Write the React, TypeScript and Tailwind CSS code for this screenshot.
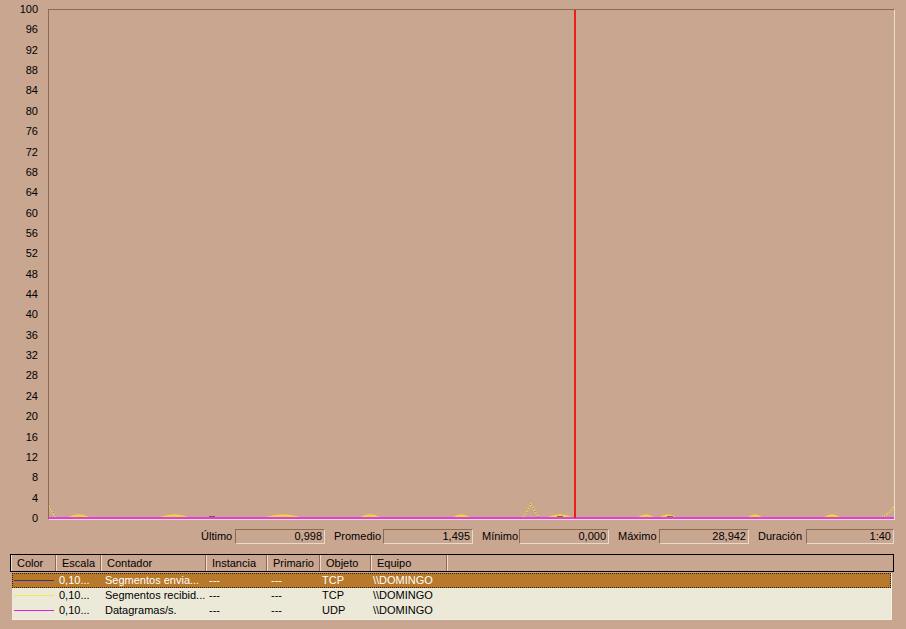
const yLabels = [100, 96, 92, 88, 84, 80, 76, 72, 68, 64, 60, 56, 52, 48, 44, 40, 36, 32, 28, 24, 20, 16, 12, 8, 4, 0]

const stats = [
  { label: 'Último', value: '0,998', lw: 'w-[34px]', w: 'w-[90px]' },
  { label: 'Promedio', value: '1,495', lw: 'w-[49px]', w: 'w-[90px]' },
  { label: 'Mínimo', value: '0,000', lw: 'w-[37px]', w: 'w-[90px]' },
  { label: 'Máximo', value: '28,942', lw: 'w-[41px]', w: 'w-[90px]' },
  { label: 'Duración', value: '1:40', lw: 'w-[48px]', w: 'w-[88px]' },
]

const columns = [
  { name: 'Color', w: 'w-[45px]' },
  { name: 'Escala', w: 'w-[45px]' },
  { name: 'Contador', w: 'w-[105px]' },
  { name: 'Instancia', w: 'w-[61px]' },
  { name: 'Primario', w: 'w-[53px]' },
  { name: 'Objeto', w: 'w-[51px]' },
  { name: 'Equipo', w: 'w-[76px]' },
]

const rows = [
  { color: '#3b2f8f', scale: '0,10...', counter: 'Segmentos envia...', inst: '---', prim: '---', obj: 'TCP', pc: '\\\\DOMINGO', selected: true },
  { color: '#ece85a', scale: '0,10...', counter: 'Segmentos recibid...', inst: '---', prim: '---', obj: 'TCP', pc: '\\\\DOMINGO', selected: false },
  { color: '#e020e0', scale: '0,10...', counter: 'Datagramas/s.', inst: '---', prim: '---', obj: 'UDP', pc: '\\\\DOMINGO', selected: false },
]

function Chart() {
  // little yellow blips sitting on the baseline
  const blips = [
    [20, 40], [112, 138], [218, 250], [312, 330], [405, 420], [500, 522], [590, 604], [612, 626], [700, 712], [776, 790],
  ]
  return (
    <svg width="845" height="509" viewBox="0 0 845 509" className="block">
      {blips.map(([a, b], i) => (
        <path key={i} d={`M${a} 508 Q${(a + b) / 2} 503 ${b} 508`} stroke="#f2d43a" strokeWidth="2.5" fill="none" />
      ))}
      <path d="M0 496 L7 508" stroke="#e8cf6a" strokeWidth="1.5" fill="none" />
      <path d="M1 497 L7 507" stroke="#3a2a20" strokeWidth="0.6" strokeDasharray="1 2" fill="none" />
      <path d="M474 508 L482 494 L490 508" stroke="#eed36a" strokeWidth="1.5" fill="none" />
      <path d="M474 508 L482 494 L490 508" stroke="#2a1e18" strokeWidth="0.6" strokeDasharray="1 2" fill="none" />
      <path d="M831 508 Q839 505 845 497" stroke="#eed36a" strokeWidth="1.5" fill="none" />
      <path d="M831 508 Q839 505 845 497" stroke="#2a1e18" strokeWidth="0.6" strokeDasharray="1 2" fill="none" />
      <path d="M160 507 L166 507 M508 507 L514 507 M618 507 L624 507" stroke="#1a1010" strokeWidth="1.2" />
      <rect x="0" y="507" width="845" height="2" fill="#e23ce2" />
      <rect x="525" y="0" width="2" height="508" fill="#ee1c1c" />
    </svg>
  )
}

export default function App() {
  return (
    <div className="w-[906px] h-[629px] bg-[#c9a690] text-black text-[11px] overflow-hidden" style={{ fontFamily: '"Liberation Sans", Arial, sans-serif' }}>
      <div className="flex pt-[2px]">
        <div className="w-[48px] h-[523px] flex flex-col justify-between items-end pr-[10px]">
          {yLabels.map((v) => (
            <div key={v} className="h-[14px] leading-[14px]">{v}</div>
          ))}
        </div>
        <div className="mt-[7px] w-[847px] h-[511px] border-t border-l border-[#8d6b53] border-r-[#efdccd] border-b-[#efdccd] border-r border-b">
          <Chart />
        </div>
      </div>

      <div className="flex justify-end items-center gap-[9px] pr-[12px] mt-[3px] h-[16px]">
        {stats.map((s) => (
          <div key={s.label} className="flex items-center">
            <span className={s.lw}>{s.label}</span>
            <div className={`${s.w} h-[15px] leading-[13px] text-right pr-[2px] border border-t-[#8d6b53] border-l-[#8d6b53] border-b-[#ecd8ca] border-r-[#ecd8ca]`}>
              {s.value}
            </div>
          </div>
        ))}
      </div>

      <div className="ml-[10px] mt-[10px] w-[884px]">
        <div className="flex h-[18px] border border-black bg-[#c9a690]">
          {columns.map((c) => (
            <div key={c.name} className={`${c.w} leading-[16px] pl-[5px] border-l border-l-[#f0dccd] border-r border-r-[#8a6a55] shrink-0`}>
              {c.name}
            </div>
          ))}
          <div className="flex-1 border-l border-l-[#f0dccd]" />
        </div>
        <div className="ml-[2px] mr-[2px] mt-[1px] h-[47px] bg-[#ece9d8] border-b border-r border-[#f6eee6]">
          {rows.map((r) => (
            <div
              key={r.counter}
              className={`flex h-[15px] leading-[13px] ${r.selected ? 'bg-[#b8792b] text-white border border-dotted border-[#2a1a10]' : 'border border-transparent'}`}
            >
              <div className="w-[44px] flex items-center pl-[1px] shrink-0">
                <div className="w-[40px] h-[1px]" style={{ backgroundColor: r.color }} />
              </div>
              <div className="w-[45px] pl-[2px] shrink-0">{r.scale}</div>
              <div className="w-[105px] pl-[3px] shrink-0 whitespace-nowrap">{r.counter}</div>
              <div className="w-[61px] pl-[2px] shrink-0">{r.inst}</div>
              <div className="w-[53px] pl-[3px] shrink-0">{r.prim}</div>
              <div className="w-[51px] pl-[1px] shrink-0">{r.obj}</div>
              <div className="w-[76px] pl-[1px] shrink-0">{r.pc}</div>
            </div>
          ))}
        </div>
      </div>
    </div>
  )
}
